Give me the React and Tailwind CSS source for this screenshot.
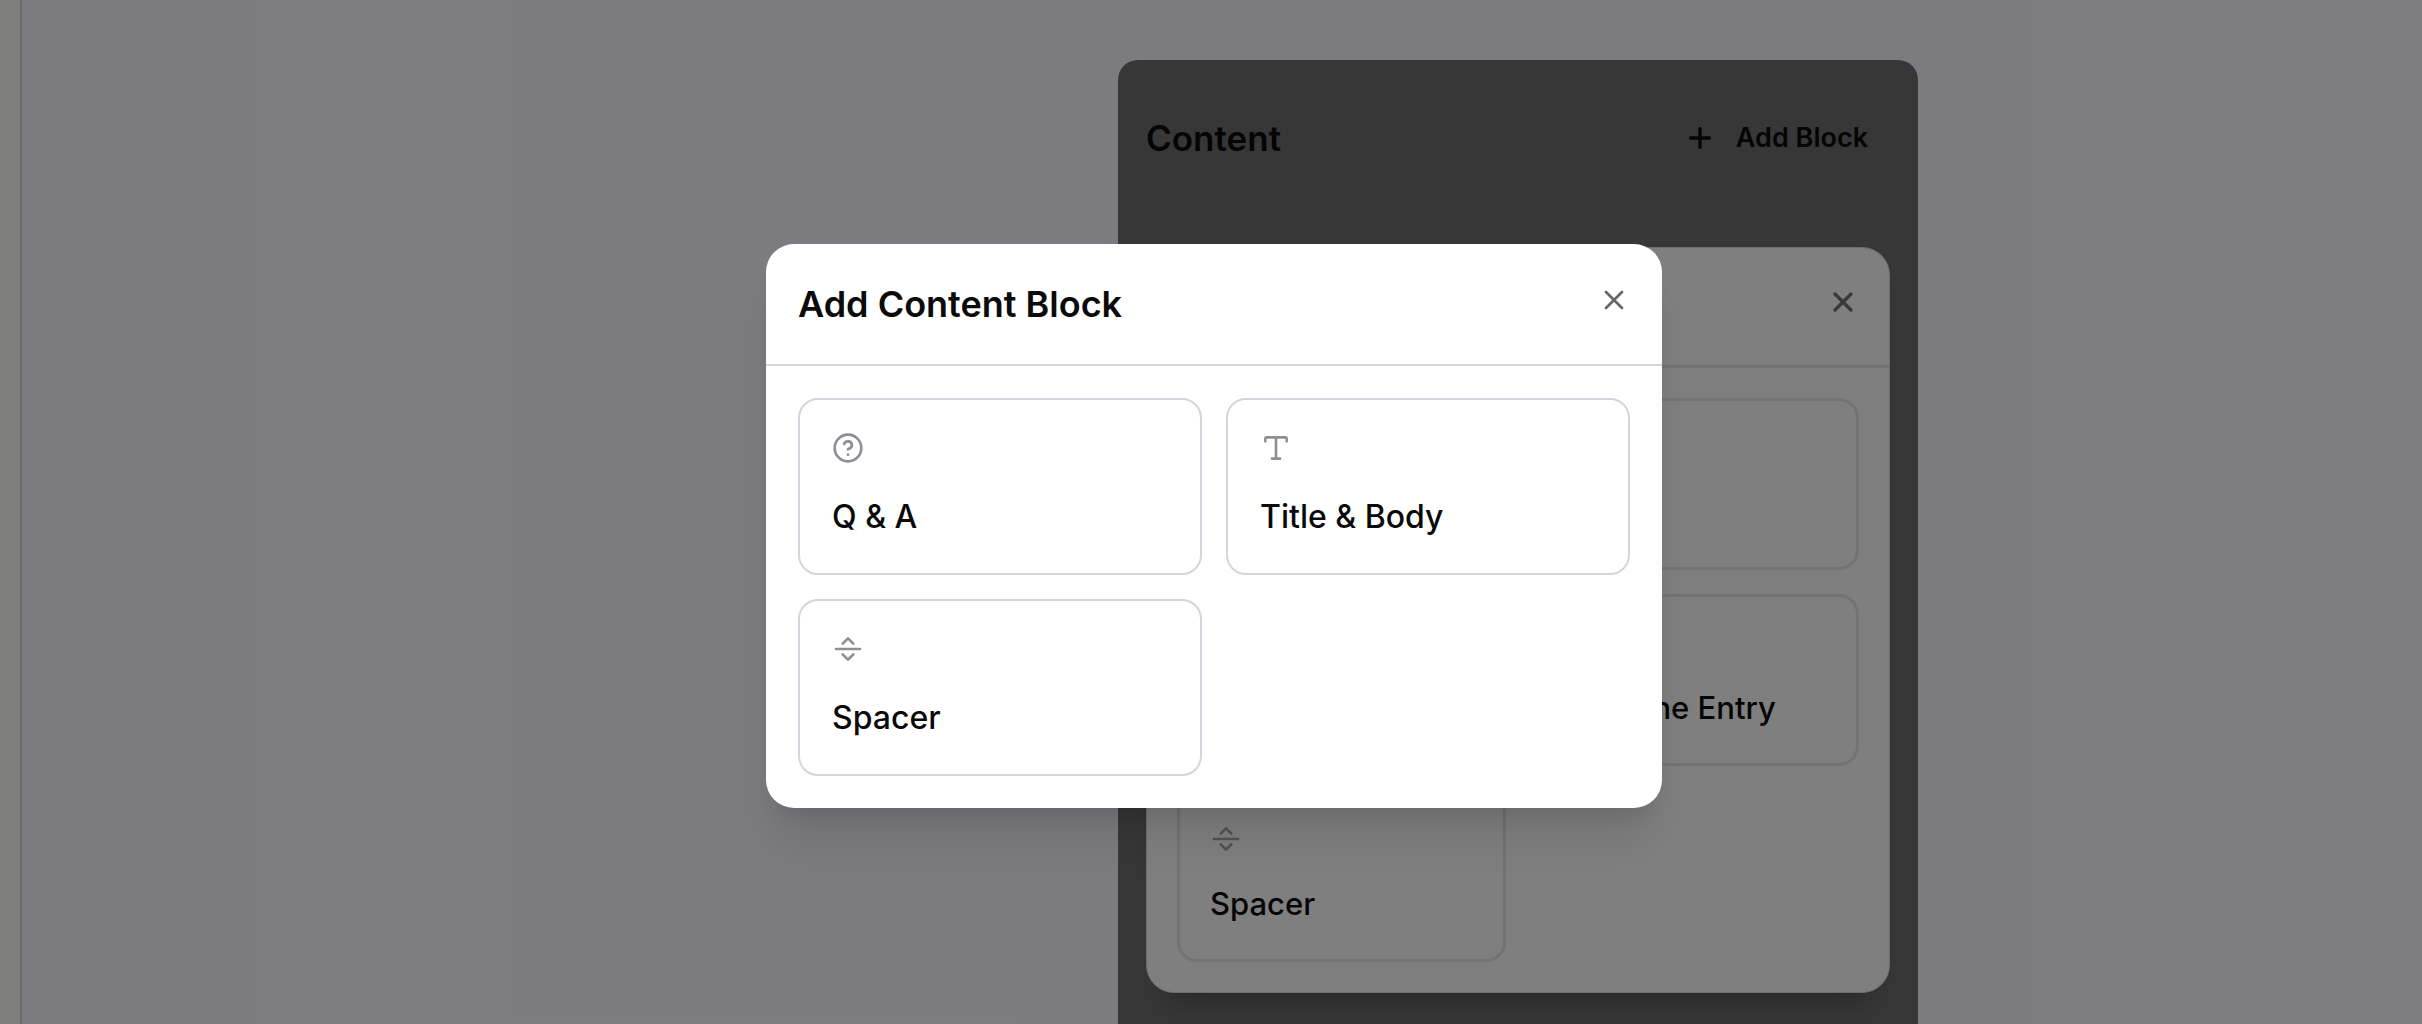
import { CircleHelp, Clock, Image, Plus, SeparatorHorizontal, Type, X } from 'lucide-react';
import clsx from 'clsx';

const BLOCKS = [
  { name: 'Q & A', label: 'Q & A', icon: CircleHelp },
  { name: 'Title & Body', label: 'Title & Body', icon: Type },
  { name: 'Spacer', label: 'Spacer', icon: SeparatorHorizontal },
];

// the first rows sit under the dialog, so they only carry their icon
const PANEL_BLOCKS = [
  { name: 'Q & A', icon: CircleHelp },
  { name: 'Image', icon: Image },
  { name: 'Title & Body', icon: Type },
  { name: 'Timeline Entry', label: 'Timeline Entry', icon: Clock },
  { name: 'Spacer', label: 'Spacer', icon: SeparatorHorizontal },
];

function BlockPicker({ title, blocks, compact }) {
  return (
    <>
      <header
        className={clsx(
          'flex items-start',
          compact ? 'h-[120px] border-b-3 border-[#e6e6ec] p-[30px]' : 'h-[122px] border-b-2 border-[#d4d4de] p-8',
        )}
      >
        {title && <h2 className="text-4xl/[56px] font-semibold">{title}</h2>}
        <button
          type="button"
          aria-label="Close"
          className={clsx('-mr-2 ml-auto p-2', compact ? 'text-[#727272]' : 'text-[#666668]')}
        >
          <X className="size-8" strokeWidth={compact ? 2.5 : 2} />
        </button>
      </header>
      <div className={clsx('grid grid-cols-2 gap-6', compact ? 'p-[30px]' : 'p-8')}>
        {blocks.map(({ name, label, icon: Icon }) => (
          <button
            key={name}
            type="button"
            aria-label={name}
            className={clsx(
              'flex flex-col items-start rounded-[20px] text-left font-medium',
              compact
                ? 'h-[172px] gap-7 border-3 border-[#e6e6ec] p-[30px] text-[31px]/[42px]'
                : 'h-[177px] gap-8 border-2 border-[#d4d4de] p-8 text-[32px]/[42px]',
            )}
          >
            <Icon className={clsx('size-8 shrink-0', compact ? 'text-[#a4a4a8]' : 'text-[#8e8e96]')} strokeWidth={2} />
            {label}
          </button>
        ))}
      </div>
    </>
  );
}

export default function App() {
  return (
    <div className="relative flex h-screen overflow-hidden bg-[#f9f7ff] font-['Inter',sans-serif] text-[#0a0a0a]">
      <aside className="w-[22px] shrink-0 border-r-2 border-[#d7d7da] bg-[#fffffc]" />
      <main className="flex flex-1 justify-end pt-[60px] pr-[504px]">
        <section className="w-[800px] rounded-t-[20px] bg-[#6e6e70] px-7">
          <div className="flex h-[187px] items-start justify-between pt-12">
            <h1 className="text-[35px]/[60px] font-semibold">Content</h1>
            <button type="button" className="flex h-[60px] items-center gap-5 px-[22px] text-[27px] font-semibold">
              <Plus className="size-8" strokeWidth={2.5} />
              Add Block
            </button>
          </div>
          <div className="rounded-[28px] border border-[#dcdcde] bg-white shadow-[0_30px_30px_-20px_rgba(0,0,0,0.25)]">
            <BlockPicker blocks={PANEL_BLOCKS} compact />
          </div>
        </section>
      </main>

      {/* backdrop + dialog */}
      <div className="absolute inset-0 flex items-center justify-center bg-black/50 pt-7 pl-1.5">
        <div
          role="dialog"
          aria-label="Add Content Block"
          className="w-[896px] rounded-[28px] bg-white shadow-[0_40px_50px_-10px_rgba(0,0,0,0.1),0_16px_20px_-12px_rgba(0,0,0,0.1)]"
        >
          <BlockPicker title="Add Content Block" blocks={BLOCKS} />
        </div>
      </div>
    </div>
  );
}
